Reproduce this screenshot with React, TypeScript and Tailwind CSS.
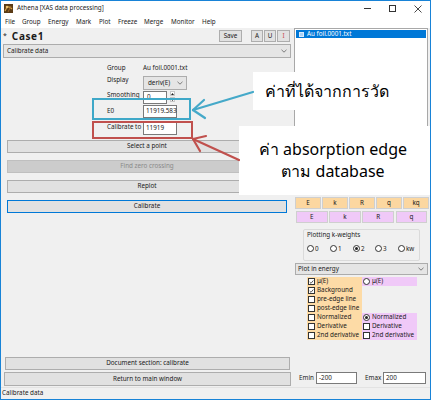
import type { ReactNode } from 'react';

const MENU: [string, string][] = [
  ['File', 'w-[17px]'], ['Group', 'w-[26px]'], ['Energy', 'w-[28px]'], ['Mark', 'w-[23px]'],
  ['Plot', 'w-[19px]'], ['Freeze', 'w-[26px]'], ['Merge', 'w-[27px]'], ['Monitor', 'w-[31px]'], ['Help', 'w-[20px]'],
];

function Btn({ label, className = '', disabled = false, focused = false }: { label: ReactNode; className?: string; disabled?: boolean; focused?: boolean }) {
  return (
    <div
      className={`flex items-center justify-center shrink-0 ${
        focused ? 'border-[1.5px] border-[#0078d7] bg-[#e1e1e1]' : disabled ? 'border border-[#bfbfbf] bg-[#cccccc] text-[#8a8a8a]' : 'border border-[#adadad] bg-[#e1e1e1]'
      } ${className}`}
    >
      {label}
    </div>
  );
}

function Chevron() {
  return (
    <svg width="6" height="4" viewBox="0 0 6 4" className="shrink-0">
      <path d="M0.5 0.8 L3 3.2 L5.5 0.8" fill="none" stroke="#606060" strokeWidth="0.8" />
    </svg>
  );
}

function Radio({ on = false }: { on?: boolean }) {
  return (
    <span className="w-[7px] h-[7px] rounded-full border border-[#333] bg-white flex items-center justify-center shrink-0">
      {on && <span className="w-[3px] h-[3px] rounded-full bg-[#222]" />}
    </span>
  );
}

function Check({ on = false }: { on?: boolean }) {
  return (
    <span className="w-[7px] h-[7px] border border-[#333] bg-white flex items-center justify-center shrink-0">
      {on && (
        <svg width="6" height="6" viewBox="0 0 6 6">
          <path d="M0.8 3 L2.4 4.6 L5.2 1.2" fill="none" stroke="#222" strokeWidth="0.9" />
        </svg>
      )}
    </span>
  );
}

function Row({ children, bg = '' }: { children?: ReactNode; bg?: string }) {
  return <div className={`h-[9px] flex items-center gap-[2px] pl-[1px] ${bg}`}>{children}</div>;
}

export default function App() {
  return (
    <div className="relative w-[431px] h-[400px] overflow-hidden border border-[#1883d7] bg-[#f0f0f0] text-[6.3px] leading-none text-[#1a1a1a] font-['Noto_Sans',sans-serif] flex flex-col">
      {/* title bar */}
      <div className="h-[15px] bg-white flex items-center shrink-0">
        <svg width="9" height="9" viewBox="0 0 9 9" className="ml-[3px]">
          <rect width="9" height="9" fill="#5a3b16" />
          <path d="M1 7 C3 2, 5 2, 8 5" stroke="#d9a441" strokeWidth="1.2" fill="none" />
          <circle cx="3" cy="3" r="1.3" fill="#e8c070" />
          <path d="M4 8 L7 2" stroke="#a06a28" strokeWidth="1" />
        </svg>
        <span className="ml-[4px] text-[#222]">Athena [XAS data processing]</span>
        <div className="ml-auto flex items-center h-full">
          <div className="w-[25px] flex justify-center">
            <span className="w-[7px] h-px bg-[#333]" />
          </div>
          <div className="w-[25px] flex justify-center">
            <span className="w-[7px] h-[7px] border border-[#333]" />
          </div>
          <div className="w-[25px] flex justify-center">
            <svg width="8" height="8" viewBox="0 0 8 8">
              <path d="M0.5 0.5 L7.5 7.5 M7.5 0.5 L0.5 7.5" stroke="#333" strokeWidth="0.9" />
            </svg>
          </div>
        </div>
      </div>

      {/* menu bar */}
      <div className="h-[12px] bg-white flex items-center shrink-0 pl-[4px]">
        {MENU.map(([m, w]) => (
          <span key={m} className={w}>{m}</span>
        ))}
      </div>

      <div className="flex flex-1 min-h-0">
        {/* left panel */}
        <div className="ml-[2px] w-[288px] flex flex-col">
          <div className="mt-[2px] h-[12px] flex items-center">
            <span className="self-start mt-[2px] text-[7px]">*</span>
            <span className="ml-[5px] text-[10px] font-bold tracking-[0.6px]">Case1</span>
            <Btn label="Save" className="ml-auto w-[23px] h-[12px]" />
            <Btn label="A" className="ml-[9px] w-[12px] h-[12px]" />
            <Btn label="U" className="ml-[1px] w-[12px] h-[12px]" />
            <Btn label={<span className="text-[#c84848]">I</span>} className="ml-[1px] mr-[1px] w-[13px] h-[12px]" />
          </div>

          <div className="mt-[2px] h-[14px] bg-[#e5e5e5] border border-[#acacac] flex items-center pl-[3px] pr-[3px]">
            <span>Calibrate data</span>
            <span className="ml-auto"><Chevron /></span>
          </div>

          <div className="pl-[104px] flex flex-col">
            <div className="mt-[5px] h-[10px] flex items-center">
              <span className="w-[36px]">Group</span>
              <span>Au foil.0001.txt</span>
            </div>
            <div className="mt-[3px] h-[14px] flex">
              <span className="w-[36px] pt-[1px]">Display</span>
              <div className="w-[44px] h-[14px] bg-[#e5e5e5] border border-[#acacac] flex items-center pl-[4px] pr-[3px]">
                <span>deriv(E)</span>
                <span className="ml-auto"><Chevron /></span>
              </div>
            </div>
            <div className="h-[15px] flex items-center">
              <span className="w-[36px] self-start pt-[2px]">Smoothing</span>
              <div className="w-[24px] h-[13px] bg-white border border-[#7a7a7a] flex items-center pl-[3px]">0</div>
              <div className="ml-[3px] flex flex-col gap-px self-start mt-px">
                <span className="w-[5px] h-[5px] bg-white border border-[#c8c8c8] flex items-center justify-center">
                  <svg width="3" height="2" viewBox="0 0 3 2"><path d="M0 2 L1.5 0 L3 2 Z" fill="#222" /></svg>
                </span>
                <span className="w-[5px] h-[5px] bg-white border border-[#c8c8c8] flex items-center justify-center">
                  <svg width="3" height="2" viewBox="0 0 3 2"><path d="M0 0 L1.5 2 L3 0 Z" fill="#222" /></svg>
                </span>
              </div>
            </div>
            <div className="h-[13px] flex items-center">
              <span className="w-[36px]">E0</span>
              <div className="w-[34px] h-[13px] bg-white border border-[#7a7a7a] flex items-center pl-[2px]">11919.583</div>
            </div>
            <div className="mt-[4px] h-[13px] flex">
              <span className="w-[36px] pt-[2px]">Calibrate to</span>
              <div className="w-[34px] h-[13px] bg-white border border-[#7a7a7a] flex items-center pl-[2px]">11919</div>
            </div>
          </div>

          <Btn label="Select a point" className="mt-[5px] ml-[4px] w-[280px] h-[13px]" />
          <Btn label="Find zero crossing" disabled className="mt-[7px] ml-[4px] w-[280px] h-[13px]" />
          <Btn label="Replot" className="mt-[7px] ml-[4px] w-[280px] h-[13px]" />
          <Btn label="Calibrate" focused className="mt-[7px] ml-[4px] w-[280px] h-[13px]" />

          <div className="flex-1" />
          <Btn label="Document section: calibrate" className="ml-[2px] w-[285px] h-[13px]" />
          <Btn label="Return to main window" className="mt-[2px] mb-[1px] ml-[1px] w-[287px] h-[14px]" />
        </div>

        {/* right panel */}
        <div className="ml-[3px] w-[134px] flex flex-col">
          <div className="h-[165px] bg-white border border-[#a8a8a8] pt-[1px] px-px">
            <div className="h-[8px] bg-[#0078d7] text-white flex items-center">
              <span className="ml-[3px] w-[5px] h-[5px] bg-[#a9d1f5] border border-[#d8ebfb]" />
              <span className="ml-[3px]">Au foil.0001.txt</span>
            </div>
          </div>

          <div className="mt-[4px] ml-[1px] h-[12px] flex gap-px">
            {['E', 'k', 'R', 'q', 'kq'].map((l) => (
              <Btn key={l} label={l} className="w-[26px] h-[12px] !bg-[#fcd7a0] !border-[#cfcfcf]" />
            ))}
          </div>
          <div className="mt-[2px] ml-[2px] h-[12px] flex gap-[1.7px]">
            {['E', 'k', 'R', 'q'].map((l) => (
              <Btn key={l} label={l} className="w-[31.5px] h-[12px] !bg-[#f0c9f8] !border-[#cfcfcf]" />
            ))}
          </div>

          <div className="mt-[6px] ml-[9px] w-[117px] h-[32px] border border-[#dadada] rounded-[2px] flex flex-col">
            <span className="mt-[2px] ml-[3px]">Plotting k-weights</span>
            <div className="mt-[7px] ml-[3px] flex items-center">
              {[['0', false, 'w-[23px]'], ['1', false, 'w-[23px]'], ['2', true, 'w-[22px]'], ['3', false, 'w-[23px]'], ['kw', false, 'w-[20px]']].map(([l, on, w]) => (
                <span key={l as string} className={`flex items-center gap-[1px] ${w}`}>
                  <Radio on={on as boolean} />
                  <span>{l as string}</span>
                </span>
              ))}
            </div>
          </div>

          <div className="mt-[2px] ml-[1px] w-[133px] h-[12px] bg-[#e5e5e5] border border-[#acacac] flex items-center pl-[2px] pr-[3px]">
            <span>Plot in energy</span>
            <span className="ml-auto"><Chevron /></span>
          </div>

          <div className="mt-[2px] ml-[13px] w-[110px] grid grid-cols-2">
            <div className="flex flex-col bg-[#fddba6]">
              <Row><Check on /><span>μ(E)</span></Row>
              <Row><Check on /><span>Background</span></Row>
              <Row><Check /><span>pre-edge line</span></Row>
              <Row><Check /><span>post-edge line</span></Row>
              <Row><Check /><span>Normalized</span></Row>
              <Row><Check /><span>Derivative</span></Row>
              <Row><Check /><span>2nd derivative</span></Row>
            </div>
            <div className="flex flex-col">
              <Row bg="bg-[#f0c9f8]"><Radio /><span>μ(E)</span></Row>
              <Row />
              <Row />
              <Row />
              <Row bg="bg-[#f0c9f8]"><Radio on /><span>Normalized</span></Row>
              <Row bg="bg-[#f0c9f8]"><Check /><span>Derivative</span></Row>
              <Row bg="bg-[#f0c9f8]"><Check /><span>2nd derivative</span></Row>
            </div>
          </div>

          <div className="flex-1" />
          <div className="mb-[3px] h-[12px] flex items-center">
            <span className="ml-[5px] w-[17px]">Emin</span>
            <div className="w-[41px] h-[12px] bg-white border border-[#7a7a7a] flex items-center pl-[2px]">-200</div>
            <span className="ml-[8px] w-[18px]">Emax</span>
            <div className="w-[43px] h-[12px] bg-white border border-[#7a7a7a] flex items-center pl-[2px]">200</div>
          </div>
        </div>
      </div>

      {/* status bar */}
      <div className="h-[12px] shrink-0 flex items-center pl-[1px] border-t border-[#e3e3e3]">Calibrate data</div>

      {/* annotation highlights */}
      <div className="absolute left-[91px] top-[97px] w-[99px] h-[22px] border-2 border-[#3fa8c8]" />
      <div className="absolute left-[91px] top-[120px] w-[101px] h-[18px] border-2 border-[#c0504d]" />

      {/* callouts */}
      <div className="absolute left-[252px] top-[71px] w-[167px] h-[38px] bg-white flex items-center justify-center pr-[20px] text-[16px] text-black font-['Noto_Sans','DejaVu_Sans',sans-serif]">
        ค่าที่ได้จากการวัด
      </div>
      <div className="absolute left-[238px] top-[125px] w-[192px] h-[69px] bg-white flex flex-col items-center justify-center gap-[3px] pr-[4px] text-[16px] leading-[19px] text-black font-['Noto_Sans','DejaVu_Sans',sans-serif]">
        <span>ค่า absorption edge</span>
        <span>ตาม database</span>
      </div>

      {/* arrows */}
      <svg className="absolute left-0 top-0 pointer-events-none" width="429" height="398" viewBox="1 1 429 398">
        <g stroke="#45a9c9" strokeWidth="2.2" fill="none" strokeLinecap="round">
          <path d="M253 92 L193 110" />
          <path d="M193 110 L204 100" />
          <path d="M193 110 L205 118" />
        </g>
        <g stroke="#c0504d" strokeWidth="2.2" fill="none" strokeLinecap="round">
          <path d="M239 160 L193 139" />
          <path d="M193 139 L206 136" />
          <path d="M193 139 L200 151" />
        </g>
      </svg>
    </div>
  );
}
